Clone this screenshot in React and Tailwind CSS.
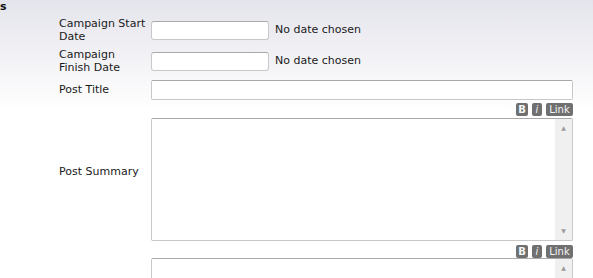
import React from 'react';

const font = { fontFamily: '"DejaVu Sans", Verdana, sans-serif' };

const Toolbar = ({ className }) => (
  <div className={`flex justify-end gap-[4px] h-[13px] ${className}`}>
    <span className="bg-[#707070] text-[#f4f4f4] text-[10px] font-bold leading-[13px] w-[12px] text-center rounded-[2px]">B</span>
    <span className="bg-[#707070] text-[#f4f4f4] text-[10px] italic leading-[13px] w-[10px] text-center rounded-[2px]">i</span>
    <span className="bg-[#707070] text-[#f4f4f4] text-[10px] leading-[13px] w-[27px] text-center rounded-[2px]">Link</span>
  </div>
);

const FakeTextarea = () => (
  <div className="flex h-[123px] border border-[#c8c8c8] border-t-[#a8a8a8] rounded-[2px] bg-white">
    <div className="flex-1" />
    <div className="w-[17px] bg-[#f0f0f0] flex flex-col justify-between items-center py-[6px]">
      <span className="text-[#9a9a9a] text-[6px] leading-none">▲</span>
      <span className="text-[#9a9a9a] text-[6px] leading-none">▼</span>
    </div>
  </div>
);

const DateRow = ({ label, h }) => (
  <div className={`flex items-center ${h}`}>
    <div className="w-[92px] text-[11px] leading-[13px] text-[#1a1a1a]">{label}</div>
    <div className="w-[118px] h-[19px] border border-[#c8c8c8] border-t-[#a8a8a8] rounded-[3px] bg-white" />
    <span className="ml-[6px] text-[11px] text-[#1a1a1a]">No date chosen</span>
  </div>
);

export default function App() {
  return (
    <div
      className="w-[593px] h-[278px] overflow-hidden bg-[linear-gradient(#e4e4ec,#ffffff_110px)]"
      style={font}
    >
      <div className="text-[11px] font-bold leading-[13px] text-[#111]">s</div>
      <div className="pl-[59px] pr-[20px] flex flex-col mt-[1px]">
        <DateRow h="h-[32px]" label={<>Campaign Start<br />Date</>} />
        <DateRow h="h-[30px]" label={<>Campaign<br />Finish Date</>} />
        <div className="flex items-center mt-[4px]">
          <div className="w-[92px] text-[11px] text-[#1a1a1a]">Post Title</div>
          <div className="flex-1 h-[20px] border border-[#c8c8c8] border-t-[#a8a8a8] rounded-[2px] bg-white" />
        </div>
        <div className="flex items-center mt-[3px]">
          <div className="w-[92px] text-[11px] text-[#1a1a1a]">Post Summary</div>
          <div className="flex-1">
            <Toolbar className="mb-[2px]" />
            <FakeTextarea />
          </div>
        </div>
        <div className="flex mt-[4px]">
          <div className="w-[92px]" />
          <div className="flex-1">
            <Toolbar />
            <FakeTextarea />
          </div>
        </div>
      </div>
    </div>
  );
}
